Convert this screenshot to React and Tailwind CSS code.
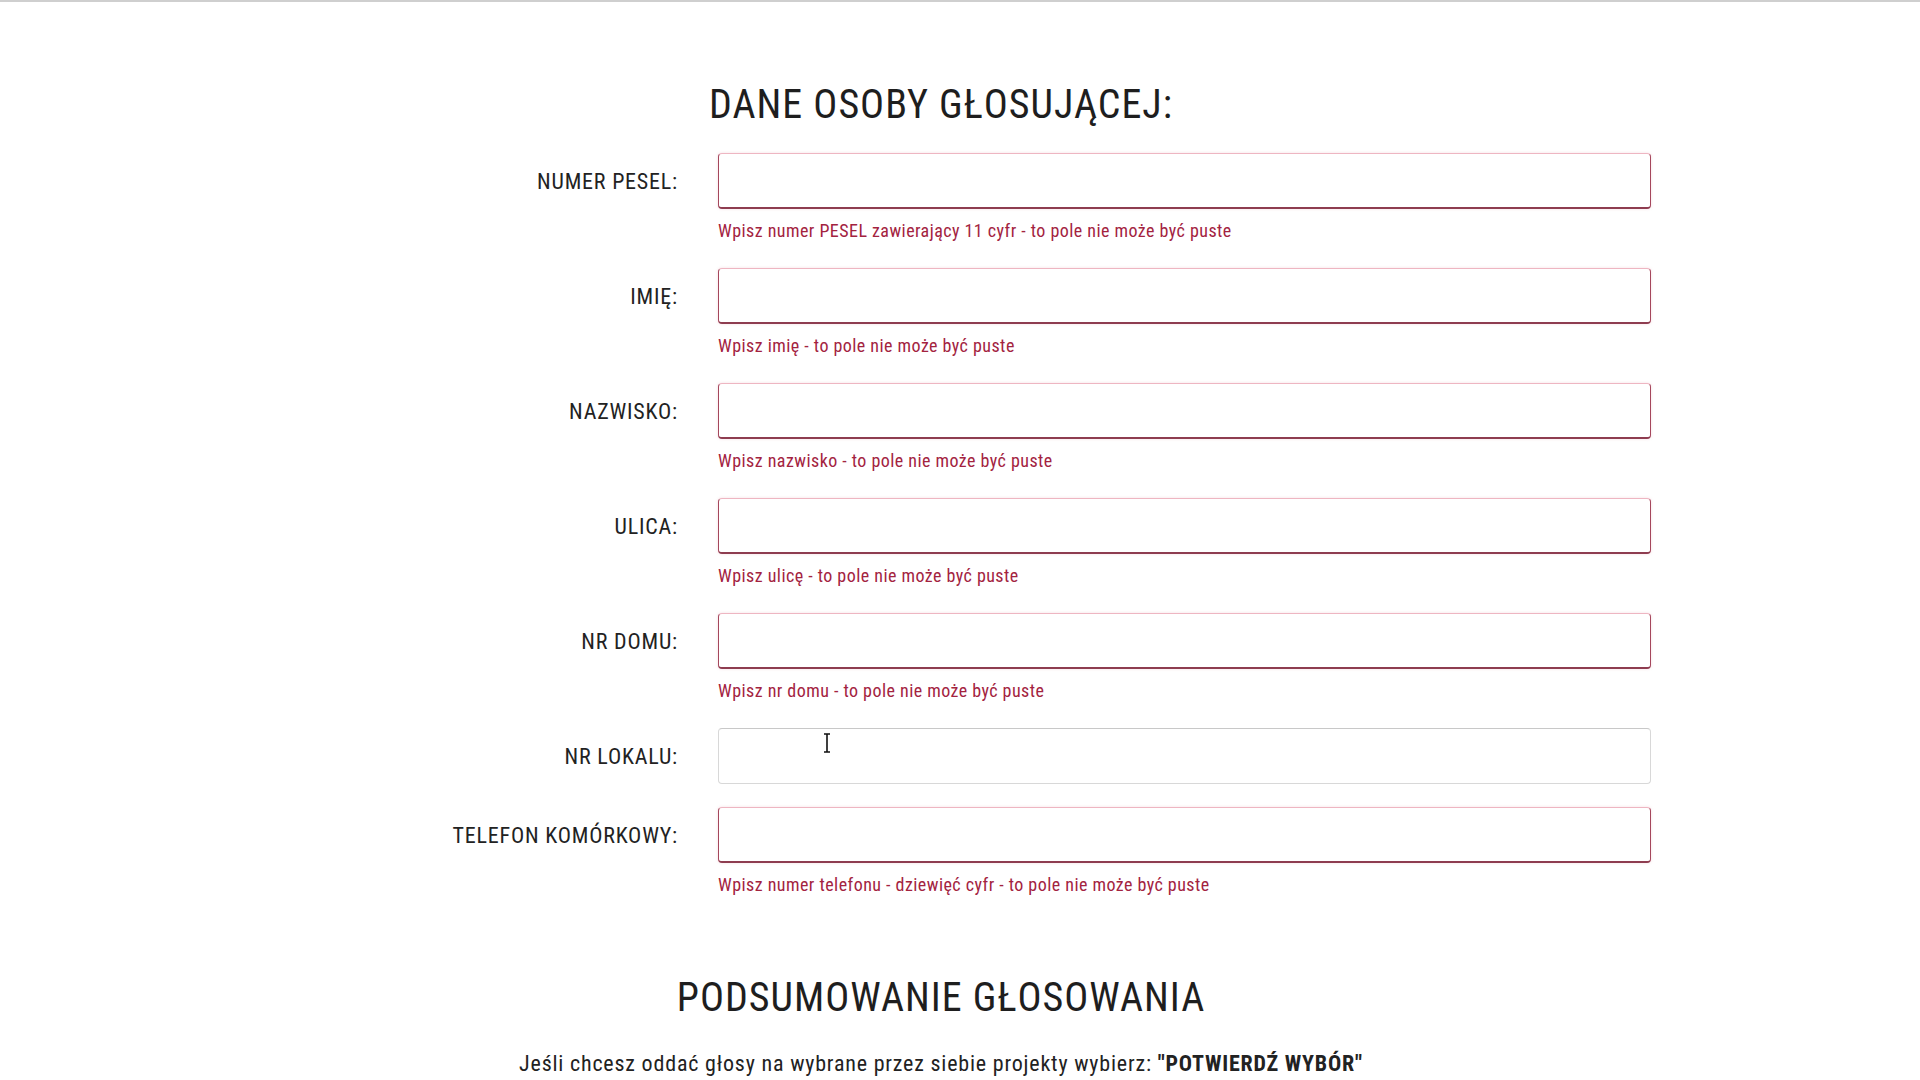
export default function App() {
  const rows = [
    { label: 'NUMER PESEL:', err: 'Wpisz numer PESEL zawierający 11 cyfr - to pole nie może być puste' },
    { label: 'IMIĘ:', err: 'Wpisz imię - to pole nie może być puste' },
    { label: 'NAZWISKO:', err: 'Wpisz nazwisko - to pole nie może być puste' },
    { label: 'ULICA:', err: 'Wpisz ulicę - to pole nie może być puste' },
    { label: 'NR DOMU:', err: 'Wpisz nr domu - to pole nie może być puste' },
    { label: 'NR LOKALU:', err: null, cursor: true },
    { label: 'TELEFON KOMÓRKOWY:', err: 'Wpisz numer telefonu - dziewięć cyfr - to pole nie może być puste' },
  ];
  return (
    <div className="min-h-screen bg-white border-t-2 border-[#cfcfcf] text-[#1e1e1e] font-['Roboto',sans-serif] [font-stretch:condensed]">
      <div className="flex justify-center pr-[38px]">
        <div className="w-[1420px]">
          <h2 className="text-center text-[40px] leading-[46px] tracking-[1px] pt-[80px] font-normal">DANE OSOBY GŁOSUJĄCEJ:</h2>
          <div className="mt-[25px] flex flex-col gap-[23px]">
            {rows.map((r) => (
              <div key={r.label} className="grid grid-cols-[447px_933px] gap-x-[40px]">
                <div className="h-[56px] flex items-center justify-end text-[22px] tracking-[0.8px] text-[#222]">{r.label}</div>
                <div>
                  {r.err ? (
                    <div className="h-[56px] rounded-[4px] border border-[#a5475c] border-t-[#eeb6c2] border-b-2 border-b-[#8e3d50] bg-white shadow-[0_0_3px_rgba(220,120,140,0.25)]" />
                  ) : (
                    <div className="relative h-[56px] rounded-[4px] border border-[#d8d8d8] border-t-[#c8c8c8] bg-white">
                      <svg className="absolute left-[104px] top-[4px]" width="8" height="20" viewBox="0 0 8 20">
                        <path d="M1 1 H7 M4 1 V19 M1 19 H7" stroke="#111" strokeWidth="1.6" fill="none" />
                      </svg>
                    </div>
                  )}
                  {r.err && (
                    <div className="mt-[12px] mb-[4px] text-[18px] leading-[20px] tracking-[0.45px] text-[#a3233f]">{r.err}</div>
                  )}
                </div>
              </div>
            ))}
          </div>
          <h2 className="text-center text-[40px] leading-[47px] tracking-[1px] mt-[75px] font-normal">PODSUMOWANIE GŁOSOWANIA</h2>
          <p className="text-center text-[22px] leading-[24px] tracking-[0.8px] mt-[31px] text-[#222]">
            Jeśli chcesz oddać głosy na wybrane przez siebie projekty wybierz: <b className="font-bold">"POTWIERDŹ WYBÓR"</b>
          </p>
        </div>
      </div>
    </div>
  );
}
